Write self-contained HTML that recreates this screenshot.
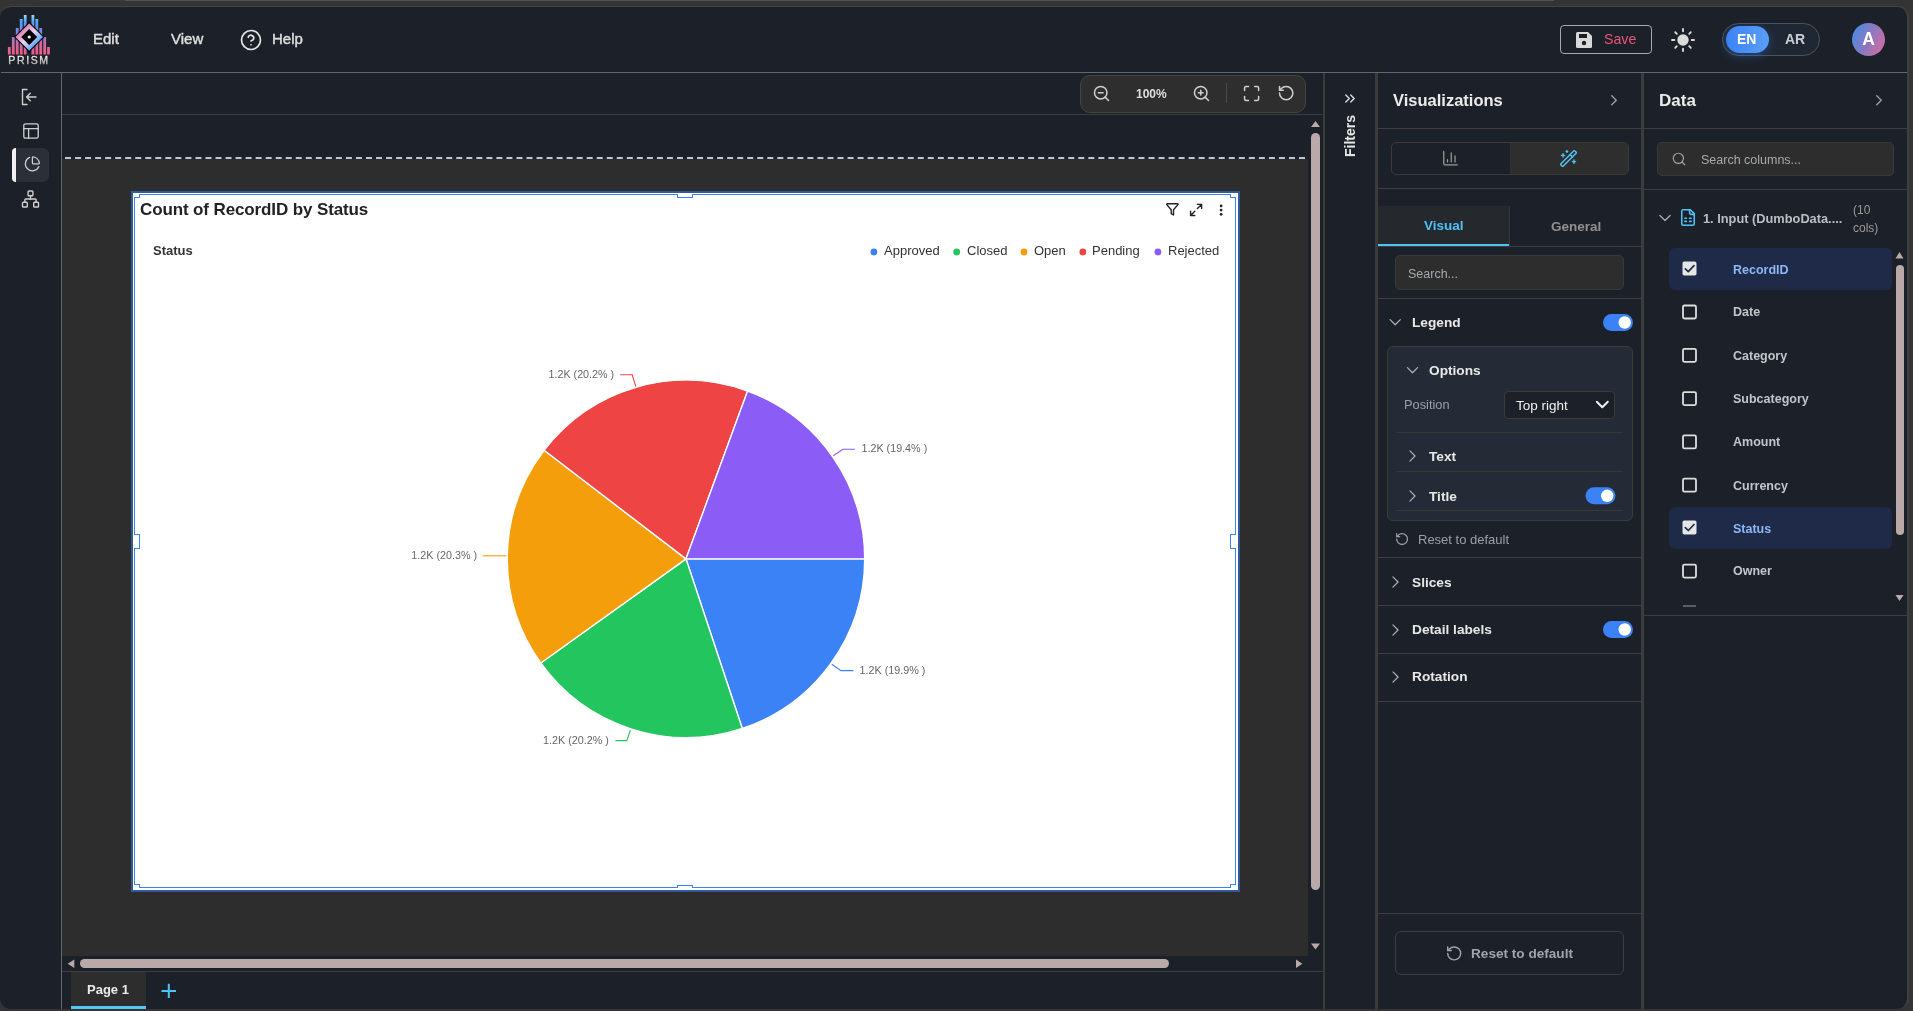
<!DOCTYPE html>
<html><head><meta charset="utf-8">
<style>
*{box-sizing:border-box;margin:0;padding:0}
html,body{width:1913px;height:1011px;overflow:hidden;background:#343434;font-family:"Liberation Sans",sans-serif}
.a{position:absolute}
.t{position:absolute;white-space:nowrap;line-height:1;will-change:transform}
svg{position:absolute;overflow:visible;will-change:transform}
</style></head>
<body>
<div class="a" style="left:39px;top:0px;width:86px;height:1px;background:#3c3c3c"></div>
<div class="a" style="left:125px;top:0px;width:1429px;height:1px;background:#525252"></div>
<div class="a" style="left:0px;top:6px;width:1909px;height:1003px;border-top:1px solid #444;border-right:2px solid #3f3f3f;border-radius:11px;background:#1c2129"></div>
<svg style="left:0;top:0" width="60" height="72" viewBox="0 0 60 72">
<defs>
<linearGradient id="lg1" gradientUnits="userSpaceOnUse" x1="0" y1="14" x2="0" y2="55">
<stop offset="0" stop-color="#a6dcff"/><stop offset="0.2" stop-color="#4e9ef3"/><stop offset="0.5" stop-color="#8a80d8"/><stop offset="0.72" stop-color="#c86aa8"/><stop offset="1" stop-color="#f85a80"/>
</linearGradient>
<linearGradient id="lg2" gradientUnits="userSpaceOnUse" x1="19" y1="27" x2="39" y2="47">
<stop offset="0" stop-color="#dd5a96"/><stop offset="0.5" stop-color="#e6d6f6"/><stop offset="1" stop-color="#2f95f0"/>
</linearGradient>
<linearGradient id="lg3" gradientUnits="userSpaceOnUse" x1="0" y1="56" x2="0" y2="64">
<stop offset="0" stop-color="#f4f4f4"/><stop offset="1" stop-color="#b0b0b0"/>
</linearGradient>
</defs>
<g fill="url(#lg1)">
<rect x="7.9" y="47" width="2.8" height="7.5"/><rect x="11.9" y="37" width="2.8" height="17.5"/><rect x="15.8" y="28" width="2.8" height="26.5"/><rect x="19.8" y="19" width="2.8" height="35.5"/><rect x="23.8" y="15" width="2.8" height="39.5"/>
<rect x="31.5" y="15" width="2.8" height="39.5"/><rect x="35.4" y="19" width="2.8" height="35.5"/><rect x="39.3" y="28" width="2.8" height="26.5"/><rect x="43.3" y="37" width="2.8" height="17.5"/><rect x="47.1" y="47" width="2.8" height="7.5"/>
</g>
<path d="M29.2 21.8 L44.4 37 L29.2 52.2 L14 37 Z" fill="#000"/>
<path d="M29.2 23.2 L43 37 L29.2 50.8 L15.4 37 Z" fill="url(#lg2)"/>
<path d="M29.2 29 L37.2 37 L29.2 45 L21.2 37 Z" fill="#000"/>
<circle cx="29.2" cy="37" r="1.6" fill="#fff"/>
<text x="29" y="64" text-anchor="middle" font-family="Liberation Sans" font-size="10.5" letter-spacing="1.6" fill="url(#lg3)" stroke="url(#lg3)" stroke-width="0.35">PRISM</text>
</svg>
<div class="t" style="left:92.5px;top:31.4px;font-size:15px;color:#dedede;-webkit-text-stroke:0.45px #dedede">Edit</div>
<div class="t" style="left:170.5px;top:31.4px;font-size:15px;color:#dedede;-webkit-text-stroke:0.45px #dedede">View</div>
<div class="t" style="left:271.5px;top:31.4px;font-size:15px;color:#dedede;-webkit-text-stroke:0.45px #dedede">Help</div>
<div class="a" style="left:1560px;top:25px;width:92px;height:29px;border:1px solid #a9a9a9;border-radius:4px"></div>
<svg style="left:1575px;top:31px" width="18" height="18" viewBox="0 0 18 18">
<path d="M1 2.5 Q1 1 2.5 1 L13 1 L17 5 L17 15.5 Q17 17 15.5 17 L2.5 17 Q1 17 1 15.5 Z" fill="#d9d9d9"/>
<rect x="4" y="3" width="8" height="4" fill="#1c2129"/>
<circle cx="9" cy="12" r="2.2" fill="#1c2129"/>
</svg>
<div class="t" style="left:1604px;top:32.2px;font-size:14.2px;color:#ea5478;">Save</div>
<svg style="left:1670.5px;top:27.5px" width="24" height="24" viewBox="-12 -12 24 24">
<circle cx="0" cy="0" r="5.7" fill="#dcdcdc"/>
<g stroke="#dcdcdc" stroke-width="1.9" stroke-linecap="round">
<line x1="0" y1="-8.7" x2="0" y2="-11"/><line x1="0" y1="8.7" x2="0" y2="11"/>
<line x1="-8.7" y1="0" x2="-11" y2="0"/><line x1="8.7" y1="0" x2="11" y2="0"/>
<line x1="6.2" y1="6.2" x2="7.8" y2="7.8"/><line x1="-6.2" y1="6.2" x2="-7.8" y2="7.8"/>
<line x1="6.2" y1="-6.2" x2="7.8" y2="-7.8"/><line x1="-6.2" y1="-6.2" x2="-7.8" y2="-7.8"/>
</g></svg>
<div class="a" style="left:1722px;top:23px;width:98px;height:33px;border:1px solid #4a5363;border-radius:17px;background:#1f2733"></div>
<div class="a" style="left:1726px;top:26px;width:43px;height:27px;border-radius:14px;background:linear-gradient(90deg,#3b82f6,#5b9ef8);box-shadow:0 3px 10px rgba(59,130,246,.35)"></div>
<div class="t" style="left:1737px;top:32px;font-size:14px;font-weight:bold;color:#fff;">EN</div>
<div class="t" style="left:1785px;top:32px;font-size:14px;font-weight:bold;color:#c9ced6;">AR</div>
<div class="a" style="left:1852px;top:22.5px;width:33px;height:33px;border-radius:50%;background:linear-gradient(115deg,#3b90e6 0%,#8a78c0 50%,#e46a9c 100%)"></div>
<div class="t" style="left:1852px;top:30.8px;width:33px;text-align:center;font-size:17.5px;font-weight:bold;color:#fff">A</div>
<div class="a" style="left:1px;top:72px;width:1906px;height:1px;background:#62666d"></div>
<div class="a" style="left:61px;top:73px;width:1px;height:936px;background:#62666d"></div>
<div class="a" style="left:12px;top:147.5px;width:37px;height:34px;border-radius:6px;background:#2a2f38"></div>
<div class="a" style="left:12px;top:147.5px;width:4px;height:34px;border-radius:4px 0 0 4px;background:#f2f2f2"></div>
<div class="a" style="left:62px;top:114px;width:1261px;height:1px;background:#3b3d40"></div>
<div class="a" style="left:1080px;top:75px;width:226px;height:38px;border:1px solid #444;border-radius:10px;background:#2e2e2e"></div>
<div class="t" style="left:1136px;top:88.2px;font-size:12px;font-weight:bold;color:#dedede;">100%</div>
<div class="a" style="left:62px;top:159px;width:1246px;height:797px;background:#2d2d2d"></div>
<div class="a" style="left:65px;top:157px;width:1240px;height:2px;border-top:2px dashed #c0c6d2"></div>
<div class="a" style="left:1311px;top:133px;width:9px;height:757px;border-radius:4.5px;background:#b9a9a9"></div>
<div class="a" style="left:80px;top:959px;width:1089px;height:9px;border-radius:4.5px;background:#b9a9a9"></div>
<div class="a" style="left:62px;top:971px;width:1261px;height:1px;background:#3b3d40"></div>
<div class="a" style="left:71px;top:972px;width:75px;height:37px;background:#2d2d2d"></div>
<div class="a" style="left:71px;top:1006px;width:75px;height:3px;background:#4fc8f8"></div>
<div class="t" style="left:87px;top:982.5px;font-size:13px;font-weight:bold;color:#ececec;">Page 1</div>
<div class="a" style="left:130.5px;top:190.5px;width:1109px;height:701px;border:2.5px solid #2f5a9e;background:#fff"></div>
<div class="a" style="left:134px;top:194px;width:1102px;height:694px;border:1px solid #3b82f6"></div>
<div class="a" style="left:134px;top:194px;width:6px;height:4px;background:#fff;border-right:1px solid #3b82f6;border-bottom:1px solid #3b82f6"></div>
<div class="a" style="left:1230px;top:194px;width:6px;height:4px;background:#fff;border-left:1px solid #3b82f6;border-bottom:1px solid #3b82f6"></div>
<div class="a" style="left:134px;top:884px;width:6px;height:4px;background:#fff;border-right:1px solid #3b82f6;border-top:1px solid #3b82f6"></div>
<div class="a" style="left:1230px;top:884px;width:6px;height:4px;background:#fff;border-left:1px solid #3b82f6;border-top:1px solid #3b82f6"></div>
<div class="a" style="left:677px;top:194px;width:16px;height:4px;background:#fff;border:1px solid #3b82f6;border-top:none"></div>
<div class="a" style="left:677px;top:884.5px;width:16px;height:3.5px;background:#fff;border:1px solid #3b82f6;border-bottom:none"></div>
<div class="a" style="left:134px;top:533.5px;width:6px;height:15px;background:#fff;border:1px solid #3b82f6;border-left:none"></div>
<div class="a" style="left:1230px;top:533.5px;width:6px;height:15px;background:#fff;border:1px solid #3b82f6;border-right:none"></div>
<div class="t" style="left:139.7px;top:200.6px;font-size:17px;font-weight:bold;color:#222;letter-spacing:-0.12px">Count of RecordID by Status</div>
<div class="t" style="left:152.5px;top:243.9px;font-size:13px;font-weight:bold;color:#333;">Status</div>
<div class="t" style="left:883.5px;top:244.3px;font-size:13px;color:#333;">Approved</div>
<div class="t" style="left:966.5px;top:244.3px;font-size:13px;color:#333;">Closed</div>
<div class="t" style="left:1034.3px;top:244.3px;font-size:13px;color:#333;">Open</div>
<div class="t" style="left:1092px;top:244.3px;font-size:13px;color:#333;">Pending</div>
<div class="t" style="left:1167.5px;top:244.3px;font-size:13px;color:#333;">Rejected</div>
<div class="a" style="left:1323px;top:73px;width:2px;height:936px;background:#3d3b38"></div>
<div class="t" style="left:1349.8px;top:136px;font-size:14px;font-weight:bold;color:#e6e6e6;transform:translate(-50%,-50%) rotate(-90deg)">Filters</div>
<div class="a" style="left:1375px;top:73px;width:3px;height:936px;background:#3d3b38"></div>
<div class="t" style="left:1392.5px;top:92.2px;font-size:16.5px;font-weight:bold;color:#ececec;">Visualizations</div>
<div class="a" style="left:1378px;top:128px;width:263px;height:1px;background:#3d3d3d"></div>
<div class="a" style="left:1391px;top:142px;width:238px;height:33px;border:1px solid #3a3a3a;border-radius:5px;overflow:hidden"><div class="a" style="left:118px;top:0;width:119px;height:31px;background:#2e2e2e"></div></div>
<div class="a" style="left:1378px;top:188px;width:263px;height:1px;background:#3d3d3d"></div>
<div class="a" style="left:1378px;top:206px;width:131px;height:40px;background:#25282d"></div>
<div class="a" style="left:1509px;top:206px;width:1px;height:40px;background:#34373c"></div>
<div class="a" style="left:1378px;top:243.5px;width:131px;height:2.5px;background:#4fc3f7"></div>
<div class="a" style="left:1378px;top:246px;width:263px;height:1px;background:#3d3d3d"></div>
<div class="t" style="left:1423.8px;top:219.4px;font-size:13.5px;font-weight:bold;color:#4fc3f7;">Visual</div>
<div class="t" style="left:1550.5px;top:220.2px;font-size:13.5px;font-weight:bold;color:#909090;">General</div>
<div class="a" style="left:1395px;top:255px;width:229px;height:35px;background:#2d2d2d;border:1px solid #393939;border-radius:5px"></div>
<div class="t" style="left:1408.2px;top:267.7px;font-size:12.5px;color:#a6a9b0;">Search...</div>
<div class="a" style="left:1378px;top:298px;width:263px;height:1px;background:#3d3d3d"></div>
<div class="t" style="left:1411.5px;top:316px;font-size:13.7px;font-weight:bold;color:#e8e8e8;">Legend</div>
<div class="a" style="left:1387px;top:346px;width:246px;height:175px;background:#252b36;border:1px solid #3a3a3a;border-radius:6px"></div>
<div class="t" style="left:1428.8px;top:364.3px;font-size:13.7px;font-weight:bold;color:#e8e8e8;">Options</div>
<div class="t" style="left:1404.3px;top:398.7px;font-size:12.8px;color:#9aa0a8;">Position</div>
<div class="a" style="left:1503.5px;top:390.5px;width:111px;height:28px;background:#1c2129;border:1px solid #3a3a36;border-radius:4px"></div>
<div class="t" style="left:1516.2px;top:399.2px;font-size:13.5px;color:#f0f0f0;">Top right</div>
<div class="a" style="left:1396px;top:432px;width:227px;height:1px;background:#3a3833"></div>
<div class="t" style="left:1428.8px;top:449.7px;font-size:13.7px;font-weight:bold;color:#e8e8e8;">Text</div>
<div class="a" style="left:1396px;top:471px;width:227px;height:1px;background:#3a3833"></div>
<div class="t" style="left:1428.8px;top:489.6px;font-size:13.7px;font-weight:bold;color:#e8e8e8;">Title</div>
<div class="a" style="left:1396px;top:510px;width:227px;height:1px;background:#3a3833"></div>
<div class="t" style="left:1417.5px;top:533.3px;font-size:13px;color:#9aa0a6;">Reset to default</div>
<div class="a" style="left:1378px;top:557px;width:263px;height:1px;background:#3d3d3d"></div>
<div class="t" style="left:1411.5px;top:575.7px;font-size:13.7px;font-weight:bold;color:#e8e8e8;">Slices</div>
<div class="a" style="left:1378px;top:605px;width:263px;height:1px;background:#3d3d3d"></div>
<div class="t" style="left:1411.5px;top:623.4px;font-size:13.7px;font-weight:bold;color:#e8e8e8;">Detail labels</div>
<div class="a" style="left:1378px;top:653px;width:263px;height:1px;background:#3d3d3d"></div>
<div class="t" style="left:1411.5px;top:670.4px;font-size:13.7px;font-weight:bold;color:#e8e8e8;">Rotation</div>
<div class="a" style="left:1378px;top:701px;width:263px;height:1px;background:#3d3d3d"></div>
<div class="a" style="left:1378px;top:913px;width:263px;height:1px;background:#3d3d3d"></div>
<div class="a" style="left:1395px;top:931px;width:229px;height:43.5px;border:1px solid #3d3d3d;border-radius:6px"></div>
<div class="t" style="left:1471px;top:946.5px;font-size:13.6px;font-weight:bold;color:#a0a4ab;">Reset to default</div>
<div class="a" style="left:1641px;top:73px;width:3px;height:936px;background:#3d3d3d"></div>
<div class="t" style="left:1658.5px;top:92.2px;font-size:17px;font-weight:bold;color:#ececec;">Data</div>
<div class="a" style="left:1644px;top:128px;width:263px;height:1px;background:#3d3d3d"></div>
<div class="a" style="left:1657px;top:142px;width:237px;height:34px;background:#2d2d2d;border:1px solid #393939;border-radius:5px"></div>
<div class="t" style="left:1700.5px;top:154px;font-size:12.5px;color:#a6a9b0;">Search columns...</div>
<div class="a" style="left:1644px;top:189px;width:263px;height:1px;background:#3d3d3d"></div>
<div class="t" style="left:1702.5px;top:213.2px;font-size:12.8px;font-weight:bold;color:#bcbec2;">1. Input (DumboData....</div>
<div class="t" style="left:1852.5px;top:204px;font-size:12px;color:#9a9a9a;">(10</div>
<div class="t" style="left:1852.5px;top:222.1px;font-size:12px;color:#9a9a9a;">cols)</div>
<div class="a" style="left:1669px;top:247.8px;width:223px;height:42.5px;border-radius:6px;background:#1e2a48"></div>
<div class="a" style="left:1669px;top:506.7px;width:223px;height:42.5px;border-radius:6px;background:#1e2a48"></div>
<div class="t" style="left:1733px;top:263.6px;font-size:12.5px;font-weight:bold;color:#8cb8f8;">RecordID</div>
<div class="t" style="left:1733px;top:306.3px;font-size:12.5px;font-weight:bold;color:#c2c5c9;">Date</div>
<div class="t" style="left:1733px;top:349.6px;font-size:12.5px;font-weight:bold;color:#c2c5c9;">Category</div>
<div class="t" style="left:1733px;top:392.9px;font-size:12.5px;font-weight:bold;color:#c2c5c9;">Subcategory</div>
<div class="t" style="left:1733px;top:436.2px;font-size:12.5px;font-weight:bold;color:#c2c5c9;">Amount</div>
<div class="t" style="left:1733px;top:479.5px;font-size:12.5px;font-weight:bold;color:#c2c5c9;">Currency</div>
<div class="t" style="left:1733px;top:522.5px;font-size:12.5px;font-weight:bold;color:#8cb8f8;">Status</div>
<div class="t" style="left:1733px;top:565.4px;font-size:12.5px;font-weight:bold;color:#c2c5c9;">Owner</div>
<div class="a" style="left:1895.5px;top:265px;width:8.5px;height:269.5px;border-radius:4.25px;background:#b9a9a9"></div>
<div class="a" style="left:1644px;top:615px;width:263px;height:1px;background:#3d3d3d"></div>
<svg style="left:0;top:0" width="1913" height="1011" viewBox="0 0 1913 1011">
<g transform="translate(239.60 28.60) scale(0.95)" fill="none" stroke="#e4e4e4" stroke-width="1.8" stroke-linecap="round" stroke-linejoin="round"><circle cx="12" cy="12" r="10"/><path d="M9.09 9a3 3 0 0 1 5.83 1c0 2-3 3-3 3"/><path d="M12 17h.01"/></g>
<g fill="none" stroke="#cfcfcf" stroke-width="1.4" stroke-linecap="round" stroke-linejoin="round"><path d="M27 89.5 L22.5 89.5 L22.5 104.5 L27 104.5"/><path d="M36 97 L26.5 97 M30.3 93.2 L26.5 97 L30.3 100.8"/></g>
<g transform="translate(21.40 121.40) scale(0.8)" fill="none" stroke="#cfcfcf" stroke-width="1.65" stroke-linecap="round" stroke-linejoin="round"><rect width="18" height="18" x="3" y="3" rx="2"/><path d="M3 9h18"/><path d="M9 21V9"/></g>
<g transform="translate(24.00 155.40) scale(0.7)" fill="none" stroke="#cfcfcf" stroke-width="1.75" stroke-linecap="round" stroke-linejoin="round"><path d="M21 12c.552 0 1.005-.449.95-.998a10 10 0 0 0-8.953-8.951c-.55-.055-.998.398-.998.95v8a1 1 0 0 0 1 1z"/><path d="M21.21 15.89A10 10 0 1 1 8 2.83"/></g>
<g transform="translate(20.90 189.40) scale(0.8)" fill="none" stroke="#cfcfcf" stroke-width="1.75" stroke-linecap="round" stroke-linejoin="round"><rect x="16" y="16" width="6" height="6" rx="1"/><rect x="2" y="16" width="6" height="6" rx="1"/><rect x="9" y="2" width="6" height="6" rx="1"/><path d="M5 16v-3a1 1 0 0 1 1-1h12a1 1 0 0 1 1 1v3"/><path d="M12 12V8"/></g>
<g transform="translate(1092.14 84.14) scale(0.78)" fill="none" stroke="#cfcfcf" stroke-width="1.95" stroke-linecap="round" stroke-linejoin="round"><circle cx="11" cy="11" r="8"/><path d="m21 21-4.35-4.35"/><path d="M8 11h6"/></g>
<g transform="translate(1192.14 84.14) scale(0.78)" fill="none" stroke="#cfcfcf" stroke-width="1.95" stroke-linecap="round" stroke-linejoin="round"><circle cx="11" cy="11" r="8"/><path d="m21 21-4.35-4.35"/><path d="M11 8v6"/><path d="M8 11h6"/></g>
<path d="M1226.5 83 L1226.5 103" stroke="#4a4a4a" stroke-width="1"/>
<g transform="translate(1242.24 84.14) scale(0.78)" fill="none" stroke="#cfcfcf" stroke-width="1.95" stroke-linecap="round" stroke-linejoin="round"><path d="M8 3H5a2 2 0 0 0-2 2v3"/><path d="M21 8V5a2 2 0 0 0-2-2h-3"/><path d="M3 16v3a2 2 0 0 0 2 2h3"/><path d="M16 21h3a2 2 0 0 0 2-2v-3"/></g>
<g transform="translate(1277.32 84.22) scale(0.74)" fill="none" stroke="#cfcfcf" stroke-width="2" stroke-linecap="round" stroke-linejoin="round"><path d="M3 12a9 9 0 1 0 9-9 9.75 9.75 0 0 0-6.74 2.74L3 8"/><path d="M3 3v5h5"/></g>
<path d="M1315.5 121 L1320 127 L1311 127 Z M1311 943.5 L1320 943.5 L1315.5 949.5 Z M67.7 963.7 L74.3 959.5 L74.3 968 Z M1302.3 963.7 L1296 959.5 L1296 968 Z" fill="#b9a9a9"/>
<path d="M161.5 991 L176 991 M168.8 983.7 L168.8 998" stroke="#4fc3f7" stroke-width="2"/>
<g fill="none" stroke="#222" stroke-width="1.4" stroke-linejoin="round" stroke-linecap="round"><path d="M1166.8 204.6 Q1166.6 203.8 1167.4 203.8 L1177.6 203.8 Q1178.4 203.8 1178 204.6 L1173.5 209.8 L1173.5 215 L1171.2 213.6 L1171.2 209.8 Z"/><path d="M1197.4 208.6 L1201.6 204.4 M1197.4 204.4 L1201.6 204.4 L1201.6 208.6 M1194.8 211.3 L1190.6 215.5 M1190.6 211.3 L1190.6 215.5 L1194.8 215.5"/></g><g fill="#222"><circle cx="1221.1" cy="205.9" r="1.35"/><circle cx="1221.1" cy="210.1" r="1.35"/><circle cx="1221.1" cy="214.3" r="1.35"/></g>
<circle cx="873.9" cy="252" r="3.4" fill="#3b82f6"/>
<circle cx="956.7" cy="252" r="3.4" fill="#22c55e"/>
<circle cx="1024" cy="252" r="3.4" fill="#f59e0b"/>
<circle cx="1082.8" cy="252" r="3.4" fill="#ef4444"/>
<circle cx="1157.9" cy="252" r="3.4" fill="#8b5cf6"/>
<path d="M686.0 558.85 L864.70 558.85 A178.7 178.7 0 0 1 742.29 728.45 Z" fill="#3b82f6" stroke="#fff" stroke-width="1.4" stroke-linejoin="round"/>
<path d="M686.0 558.85 L742.29 728.45 A178.7 178.7 0 0 1 540.77 662.98 Z" fill="#22c55e" stroke="#fff" stroke-width="1.4" stroke-linejoin="round"/>
<path d="M686.0 558.85 L540.77 662.98 A178.7 178.7 0 0 1 544.11 450.21 Z" fill="#f59e0b" stroke="#fff" stroke-width="1.4" stroke-linejoin="round"/>
<path d="M686.0 558.85 L544.11 450.21 A178.7 178.7 0 0 1 747.59 391.10 Z" fill="#ef4444" stroke="#fff" stroke-width="1.4" stroke-linejoin="round"/>
<path d="M686.0 558.85 L747.59 391.10 A178.7 178.7 0 0 1 864.70 558.85 Z" fill="#8b5cf6" stroke="#fff" stroke-width="1.4" stroke-linejoin="round"/>
<g fill="none" stroke-width="1.1"><path d="M635.8 386.5 L632.2 374.8 L620.2 374.8" stroke="#ef4444"/><path d="M833.3 455.7 L842.8 449.3 L854.9 449.3" stroke="#8b5cf6"/><path d="M506.5 555.8 L482.6 555.8" stroke="#f59e0b"/><path d="M831.8 664.2 L841 670.6 L853.4 670.6" stroke="#3b82f6"/><path d="M630.4 730.3 L626.8 740.6 L615.4 740.6" stroke="#22c55e"/></g>
<g font-family="Liberation Sans" font-size="10.75" fill="#666"><text x="614.2" y="377.8" text-anchor="end">1.2K (20.2% )</text><text x="861.5" y="451.8">1.2K (19.4% )</text><text x="477.1" y="558.9" text-anchor="end">1.2K (20.3% )</text><text x="859.6" y="673.8">1.2K (19.9% )</text><text x="608.8" y="743.9" text-anchor="end">1.2K (20.2% )</text></g>
<g transform="translate(1341.60 90.20) scale(0.7)" fill="none" stroke="#dcdcdc" stroke-width="2" stroke-linecap="round" stroke-linejoin="round"><path d="m6 17 5-5-5-5"/><path d="m13 17 5-5-5-5"/></g>
<g transform="translate(1605.00 91.20) scale(0.75)" fill="none" stroke="#a0a0a0" stroke-width="1.8" stroke-linecap="round" stroke-linejoin="round"><path d="m9 18 6-6-6-6"/></g>
<g transform="translate(1441.50 149.20) scale(0.75)" fill="none" stroke="#9a9a9a" stroke-width="1.7" stroke-linecap="round" stroke-linejoin="round"><path d="M3 3v16a2 2 0 0 0 2 2h16"/><path d="M18 17V9"/><path d="M13 17V5"/><path d="M8 17v-3"/></g>
<g transform="translate(1559.14 149.14) scale(0.78)" fill="none" stroke="#4fc3f7" stroke-width="1.9" stroke-linecap="round" stroke-linejoin="round"><path d="m21.64 3.64-1.28-1.28a1.21 1.21 0 0 0-1.72 0L2.36 18.64a1.21 1.21 0 0 0 0 1.72l1.28 1.28a1.2 1.2 0 0 0 1.72 0L21.64 5.36a1.2 1.2 0 0 0 0-1.72"/><path d="m14 7 3 3"/><path d="M5 6v4"/><path d="M19 14v4"/><path d="M10 2v2"/><path d="M7 8H3"/><path d="M21 16h-4"/><path d="M11 3H9"/></g>
<g transform="translate(1385.00 312.00) scale(0.85)" fill="none" stroke="#a8adb8" stroke-width="1.5" stroke-linecap="round" stroke-linejoin="round"><path d="m6 9 6 6 6-6"/></g>
<rect x="1603" y="314" width="30" height="17" rx="8.5" fill="#3b82f6"/><circle cx="1624.7" cy="322.5" r="6.2" fill="#fff"/>
<g transform="translate(1402.30 360.00) scale(0.85)" fill="none" stroke="#a8adb8" stroke-width="1.5" stroke-linecap="round" stroke-linejoin="round"><path d="m6 9 6 6 6-6"/></g>
<path d="M1596.8 401.8 L1602.3 407.3 L1607.8 401.8" fill="none" stroke="#f0f0f0" stroke-width="2" stroke-linecap="round" stroke-linejoin="round"/>
<g transform="translate(1402.30 445.80) scale(0.85)" fill="none" stroke="#a8adb8" stroke-width="1.5" stroke-linecap="round" stroke-linejoin="round"><path d="m9 18 6-6-6-6"/></g>
<g transform="translate(1402.30 485.80) scale(0.85)" fill="none" stroke="#a8adb8" stroke-width="1.5" stroke-linecap="round" stroke-linejoin="round"><path d="m9 18 6-6-6-6"/></g>
<rect x="1585.5" y="487.3" width="30" height="17" rx="8.5" fill="#3b82f6"/><circle cx="1607.2" cy="495.8" r="6.2" fill="#fff"/>
<g transform="translate(1394.90 531.90) scale(0.6)" fill="none" stroke="#9aa0a6" stroke-width="2.1" stroke-linecap="round" stroke-linejoin="round"><path d="M3 12a9 9 0 1 0 9-9 9.75 9.75 0 0 0-6.74 2.74L3 8"/><path d="M3 3v5h5"/></g>
<g transform="translate(1385.30 571.80) scale(0.85)" fill="none" stroke="#a8adb8" stroke-width="1.5" stroke-linecap="round" stroke-linejoin="round"><path d="m9 18 6-6-6-6"/></g>
<g transform="translate(1385.30 619.80) scale(0.85)" fill="none" stroke="#a8adb8" stroke-width="1.5" stroke-linecap="round" stroke-linejoin="round"><path d="m9 18 6-6-6-6"/></g>
<rect x="1603" y="621" width="30" height="17" rx="8.5" fill="#3b82f6"/><circle cx="1624.7" cy="629.5" r="6.2" fill="#fff"/>
<g transform="translate(1385.30 666.80) scale(0.85)" fill="none" stroke="#a8adb8" stroke-width="1.5" stroke-linecap="round" stroke-linejoin="round"><path d="m9 18 6-6-6-6"/></g>
<g transform="translate(1445.56 944.76) scale(0.72)" fill="none" stroke="#a0a4ab" stroke-width="2" stroke-linecap="round" stroke-linejoin="round"><path d="M3 12a9 9 0 1 0 9-9 9.75 9.75 0 0 0-6.74 2.74L3 8"/><path d="M3 3v5h5"/></g>
<g transform="translate(1870.00 91.20) scale(0.75)" fill="none" stroke="#a0a0a0" stroke-width="1.8" stroke-linecap="round" stroke-linejoin="round"><path d="m9 18 6-6-6-6"/></g>
<g transform="translate(1671.32 151.32) scale(0.64)" fill="none" stroke="#a0a0a0" stroke-width="1.9" stroke-linecap="round" stroke-linejoin="round"><circle cx="11" cy="11" r="8"/><path d="m21 21-4.3-4.3"/></g>
<g transform="translate(1654.80 207.80) scale(0.85)" fill="none" stroke="#a8adb8" stroke-width="1.5" stroke-linecap="round" stroke-linejoin="round"><path d="m6 9 6 6 6-6"/></g>
<g transform="translate(1678.64 208.14) scale(0.78)" fill="none" stroke="#4fc3f7" stroke-width="2" stroke-linecap="round" stroke-linejoin="round"><path d="M15 2H6a2 2 0 0 0-2 2v16a2 2 0 0 0 2 2h12a2 2 0 0 0 2-2V7Z"/><path d="M14 2v4a2 2 0 0 0 2 2h4"/><path d="M8 13h2"/><path d="M14 13h2"/><path d="M8 17h2"/><path d="M14 17h2"/></g>
<rect x="1682.5" y="261.6" width="14" height="14" rx="1.8" fill="#e6e6e6"/><path d="M1685.3 268.8 L1688.3 271.6 L1694 265.6" fill="none" stroke="#1e2a48" stroke-width="1.7" stroke-linecap="round" stroke-linejoin="round"/>
<rect x="1683" y="305.5" width="13" height="13" rx="1.5" fill="none" stroke="#dedede" stroke-width="1.8"/>
<rect x="1683" y="348.8" width="13" height="13" rx="1.5" fill="none" stroke="#dedede" stroke-width="1.8"/>
<rect x="1683" y="392.1" width="13" height="13" rx="1.5" fill="none" stroke="#dedede" stroke-width="1.8"/>
<rect x="1683" y="435.4" width="13" height="13" rx="1.5" fill="none" stroke="#dedede" stroke-width="1.8"/>
<rect x="1683" y="478.7" width="13" height="13" rx="1.5" fill="none" stroke="#dedede" stroke-width="1.8"/>
<rect x="1682.5" y="520.5" width="14" height="14" rx="1.8" fill="#e6e6e6"/><path d="M1685.3 527.7 L1688.3 530.5 L1694 524.5" fill="none" stroke="#1e2a48" stroke-width="1.7" stroke-linecap="round" stroke-linejoin="round"/>
<rect x="1683" y="564.6" width="13" height="13" rx="1.5" fill="none" stroke="#dedede" stroke-width="1.8"/>
<path d="M1683 606 L1696 606" stroke="#9a9a9a" stroke-width="1"/>
<path d="M1899.5 252 L1903.5 258.5 L1895.5 258.5 Z M1895.5 595 L1903.5 595 L1899.5 601 Z" fill="#b9a9a9"/>
</svg>
</body></html>
